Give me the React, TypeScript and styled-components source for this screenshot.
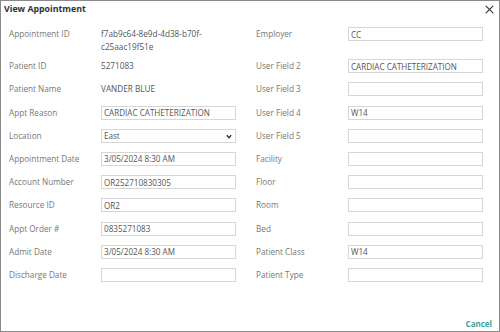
import React from "react";
import styled, { createGlobalStyle } from "styled-components";

const GlobalStyle = createGlobalStyle`
    html, body {
        margin: 0;
        padding: 0;
        background: #ffffff;
    }
    * {
        box-sizing: border-box;
    }
`

type Field = {
    label: string;
    value?: string;
    kind: "text" | "input" | "select";
};

const leftFields: Field[] = [
    {label: "Appointment ID", value: "f7ab9c64-8e9d-4d38-b70f-\nc25aac19f51e", kind: "text"},
    {label: "Patient ID", value: "5271083", kind: "text"},
    {label: "Patient Name", value: "VANDER BLUE", kind: "text"},
    {label: "Appt Reason", value: "CARDIAC CATHETERIZATION", kind: "input"},
    {label: "Location", value: "East", kind: "select"},
    {label: "Appointment Date", value: "3/05/2024 8:30 AM", kind: "input"},
    {label: "Account Number", value: "OR252710830305", kind: "input"},
    {label: "Resource ID", value: "OR2", kind: "input"},
    {label: "Appt Order #", value: "0835271083", kind: "input"},
    {label: "Admit Date", value: "3/05/2024 8:30 AM", kind: "input"},
    {label: "Discharge Date", value: "", kind: "input"},
]

const rightFields: Field[] = [
    {label: "Employer", value: "CC", kind: "input"},
    {label: "User Field 2", value: "CARDIAC CATHETERIZATION", kind: "input"},
    {label: "User Field 3", value: "", kind: "input"},
    {label: "User Field 4", value: "W14", kind: "input"},
    {label: "User Field 5", value: "", kind: "input"},
    {label: "Facility", value: "", kind: "input"},
    {label: "Floor", value: "", kind: "input"},
    {label: "Room", value: "", kind: "input"},
    {label: "Bed", value: "", kind: "input"},
    {label: "Patient Class", value: "W14", kind: "input"},
    {label: "Patient Type", value: "", kind: "input"},
]

const FieldValue = ({field}: { field: Field }) => {
    if (field.kind === "text") {
        return <StyledValue>{field.value}</StyledValue>
    }
    if (field.kind === "select") {
        return (
            <StyledSelectWrap>
                <StyledSelect defaultValue={field.value}>
                    <option>East</option>
                    <option>West</option>
                </StyledSelect>
                <StyledChevron width="6" height="5" viewBox="0 0 6 5">
                    <path d="M0.8 1.2 L3 3.6 L5.2 1.2" fill="none" stroke="#333" strokeWidth="1.4"/>
                </StyledChevron>
            </StyledSelectWrap>
        )
    }
    return <StyledInput type="text" defaultValue={field.value} readOnly/>
}

export default function App() {
    const rows = leftFields.map((left, i) => ({left, right: rightFields[i]}))

    return (
        <>
            <GlobalStyle/>
            <StyledDialog>
                <StyledHeader>
                    <StyledTitle>View Appointment</StyledTitle>
                    <StyledClose aria-label="Close">
                        <svg width="9" height="9" viewBox="0 0 9 9">
                            <path d="M0.8 0.8 L8.2 8.2 M8.2 0.8 L0.8 8.2" stroke="#333" strokeWidth="1.1"/>
                        </svg>
                    </StyledClose>
                </StyledHeader>

                <StyledGrid>
                    {rows.map(({left, right}) => (
                        <React.Fragment key={left.label}>
                            <StyledLabel>{left.label}</StyledLabel>
                            <FieldValue field={left}/>
                            <span/>
                            <StyledLabel>{right.label}</StyledLabel>
                            <FieldValue field={right}/>
                        </React.Fragment>
                    ))}
                </StyledGrid>

                <StyledFooter>
                    <StyledCancel>Cancel</StyledCancel>
                </StyledFooter>
            </StyledDialog>
        </>
    )
}

const StyledDialog = styled.div`
    width: 500px;
    height: 332px;
    border: 1px solid #8a8a8a;
    background: #fff;
    display: flex;
    flex-direction: column;
    font-family: "Open Sans", "Liberation Sans", sans-serif;
`

const StyledHeader = styled.div`
    display: flex;
    justify-content: space-between;
    align-items: flex-start;
    padding: 2px 5px 0 3px;
`

const StyledTitle = styled.h2`
    margin: 0;
    font-size: 8.8px;
    line-height: 12px;
    font-weight: 700;
    color: #333;
`

const StyledClose = styled.button`
    border: none;
    background: none;
    padding: 0;
    margin-top: 2px;
    width: 9px;
    height: 9px;
    display: flex;
    cursor: pointer;
`

const StyledGrid = styled.div`
    display: grid;
    grid-template-columns: 92px 135px 20px 92px 135px;
    grid-auto-rows: auto;
    row-gap: 9.2px;
    padding: 12px 0 0 8px;
    align-items: start;
`

const StyledLabel = styled.div`
    font-size: 8.2px;
    line-height: 14px;
    color: #787878;
    white-space: nowrap;
`

const StyledValue = styled.div`
    font-size: 8.2px;
    line-height: 13px;
    color: #555;
    white-space: pre-line;
    margin-bottom: -3px;
`

const StyledInput = styled.input`
    display: block;
    width: 135px;
    height: 14px;
    border: 1px solid #d6d6d6;
    padding: 0 2px;
    margin: 0;
    font-family: inherit;
    font-size: 8.1px;
    color: #555;
    background: #fff;
    outline: none;
`

const StyledSelectWrap = styled.div`
    position: relative;
    width: 135px;
    height: 14px;
`

const StyledSelect = styled.select`
    appearance: none;
    display: block;
    width: 135px;
    height: 14px;
    min-height: 0;
    border: 1px solid #d6d6d6;
    border-radius: 0;
    padding: 0 2px;
    margin: 0;
    line-height: 12px;
    font-family: inherit;
    font-size: 8.1px;
    color: #555;
    background: #fff;
    outline: none;
`

const StyledChevron = styled.svg`
    position: absolute;
    right: 4px;
    top: 5px;
    pointer-events: none;
`

const StyledFooter = styled.div`
    margin-top: auto;
    display: flex;
    justify-content: flex-end;
    padding: 0 7px 2px 0;
`

const StyledCancel = styled.button`
    border: none;
    background: none;
    padding: 0;
    font-family: inherit;
    font-size: 8px;
    line-height: 10px;
    font-weight: 700;
    color: #3aa59c;
    cursor: pointer;
`
